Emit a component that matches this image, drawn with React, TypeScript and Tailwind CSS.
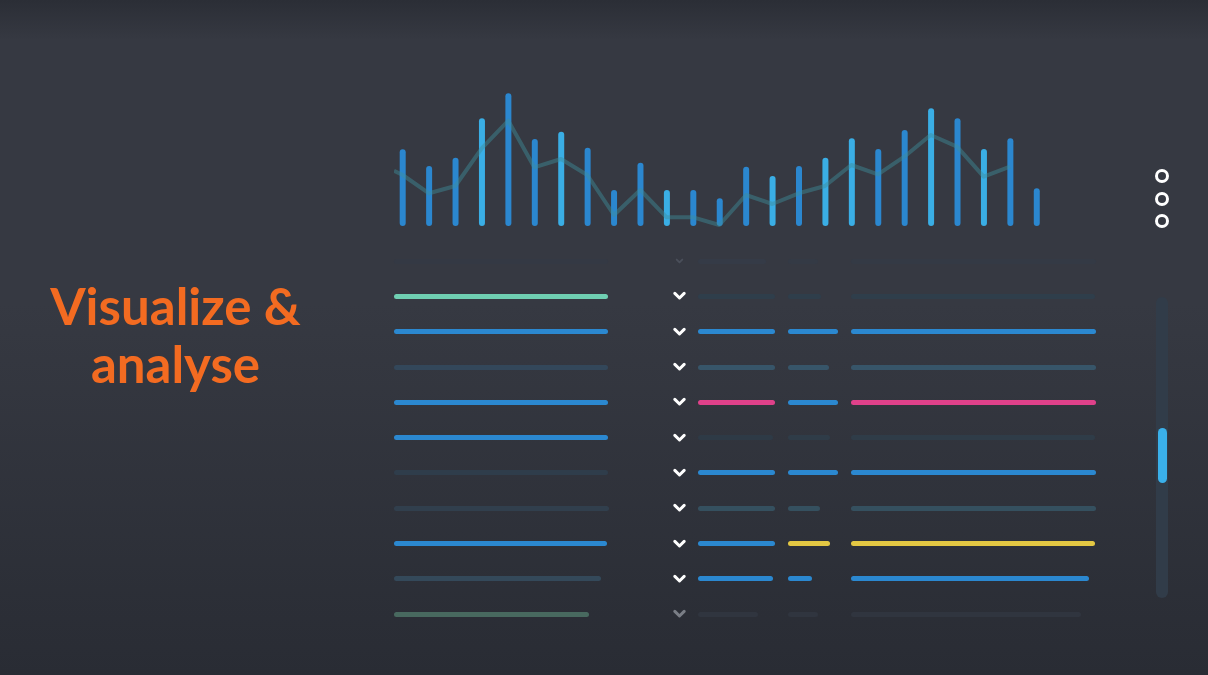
import React from "react";

const TOPS = [149.3, 166, 157.7, 118.3, 93.3, 139, 131.7, 147.7, 190, 162.7, 190, 190, 198.3, 166.7, 176, 166, 157.7, 138.3, 149, 130, 108.3, 118.3, 149, 138.3, 188.3];
const LIGHT = new Set([3, 6, 10, 14, 16, 17, 20, 22]);
const LINE = "0,82.7 8.7,87 35,105.3 61.3,98 87.7,60.3 114.3,32.7 140.3,79.3 167,71 193.3,87 220,127 246.3,102 272.7,129.3 299.3,129.3 325.3,137 352,107 378.3,116 404.7,105.3 431,98 457.3,77 484,86.3 510.3,68.7 536.7,47 563,58.7 589.7,88.7 616,78.7";

type Row = {
  l: string; lw: number;
  a: string; aw: number;
  b: string; bw: number;
  c: string; cw: number;
  chev: string;
};

const BLUE = "#2b88d0";
const rows: Row[] = [
  { l: "#343944", lw: 214, a: "#353b47", aw: 68, b: "#343a45", bw: 30, c: "#343a45", cw: 245, chev: "#4a4f5a" },
  { l: "#6fcfb2", lw: 214, a: "#2f3e4b", aw: 77, b: "#2f3e4b", bw: 33, c: "#2f3e4b", cw: 244, chev: "#ffffff" },
  { l: BLUE, lw: 214, a: BLUE, aw: 77, b: BLUE, bw: 50, c: BLUE, cw: 245, chev: "#ffffff" },
  { l: "#33475a", lw: 214, a: "#375569", aw: 77, b: "#375569", bw: 41, c: "#375569", cw: 245, chev: "#ffffff" },
  { l: BLUE, lw: 214, a: "#df418a", aw: 77, b: BLUE, bw: 50, c: "#df418a", cw: 245, chev: "#ffffff" },
  { l: BLUE, lw: 214, a: "#2e3a46", aw: 75, b: "#2f3c48", bw: 42, c: "#2f3c48", cw: 244, chev: "#ffffff" },
  { l: "#2f3d4b", lw: 214, a: BLUE, aw: 77, b: BLUE, bw: 50, c: BLUE, cw: 245, chev: "#ffffff" },
  { l: "#313f4d", lw: 215, a: "#35505f", aw: 77, b: "#35505f", bw: 32, c: "#35505f", cw: 245, chev: "#ffffff" },
  { l: BLUE, lw: 213, a: BLUE, aw: 77, b: "#e3c743", bw: 42, c: "#e3c743", cw: 244, chev: "#ffffff" },
  { l: "#34495a", lw: 207, a: BLUE, aw: 75, b: BLUE, bw: 24, c: BLUE, cw: 238, chev: "#ffffff" },
  { l: "#48695f", lw: 195, a: "#30353f", aw: 60, b: "#30353f", bw: 30, c: "#30353f", cw: 230, chev: "#7a7e86" },
];

function Chevron({ color, small }: { color: string; small?: boolean }) {
  return (
    <svg width="14" height="10" viewBox="0 0 14 10" className="block">
      <polyline
        points={small ? "4,3.5 7,6.5 10,3.5" : "2,2.2 7,7.2 12,2.2"}
        fill="none"
        stroke={color}
        strokeWidth={small ? 2 : 3.2}
        strokeLinecap="round"
        strokeLinejoin="round"
      />
    </svg>
  );
}

function Bar({ color, w }: { color: string; w: number }) {
  return <div className="h-[5px] rounded-full" style={{ background: color, width: w }} />;
}

export default function App() {
  return (
    <div className="w-[1208px] h-[675px] overflow-hidden flex bg-[linear-gradient(180deg,#2b2e36_0%,#363942_6%,#363942_45%,#292c34_100%)]">
      <div className="w-[351px] h-full flex items-center justify-center pb-[5px]">
        <h1 className="text-center font-bold text-[51px] leading-[58px] text-[#f36b21] [font-family:Lato,'Noto_Sans',sans-serif]">
          Visualize &amp;
          <br />
          analyse
        </h1>
      </div>

      <div className="ml-[43px] w-[702px] pt-[88px] flex flex-col">
        <svg width="702" height="140" viewBox="0 0 702 140" className="block">
          {TOPS.map((t, i) => {
            const x = 8.7 + 26.42 * i;
            return (
              <line
                key={i}
                x1={x}
                x2={x}
                y1={t - 88 + 3}
                y2={226 - 88 - 3}
                stroke={LIGHT.has(i) ? "#3aaee5" : "#2b87cf"}
                strokeWidth={6}
                strokeLinecap="round"
              />
            );
          })}
          <polyline
            points={LINE}
            fill="none"
            stroke="#3f8f9c"
            strokeOpacity={0.45}
            strokeWidth={4}
            strokeLinejoin="round"
          />
        </svg>

        <div className="mt-[15.5px] flex flex-col">
          {rows.map((r, i) => (
            <div key={i} className="h-[35.3px] flex items-center">
              <div className="w-[279px] flex items-center">
                <Bar color={r.l} w={r.lw} />
              </div>
              <div className="w-[13px] flex items-center justify-center">
                <Chevron color={r.chev} small={i === 0} />
              </div>
              <div className="ml-[12px] w-[90px] flex items-center">
                <Bar color={r.a} w={r.aw} />
              </div>
              <div className="w-[63px] flex items-center">
                <Bar color={r.b} w={r.bw} />
              </div>
              <div className="flex items-center">
                <Bar color={r.c} w={r.cw} />
              </div>
            </div>
          ))}
        </div>
      </div>

      <div className="ml-[59px] w-[14px] pt-[169px] flex flex-col items-center">
        <div className="flex flex-col items-center gap-[8.5px]">
          <div className="w-[14px] h-[14px] rounded-full border-[3px] border-white" />
          <div className="w-[14px] h-[14px] rounded-full border-[3px] border-white" />
          <div className="w-[14px] h-[14px] rounded-full border-[3px] border-white" />
        </div>
        <div className="mt-[69px] w-[12px] h-[301px] rounded-full bg-[#313c49] flex flex-col items-center">
          <div className="mt-[131px] w-[9px] h-[55px] rounded-full bg-[#3ab0ea]" />
        </div>
      </div>
    </div>
  );
}
